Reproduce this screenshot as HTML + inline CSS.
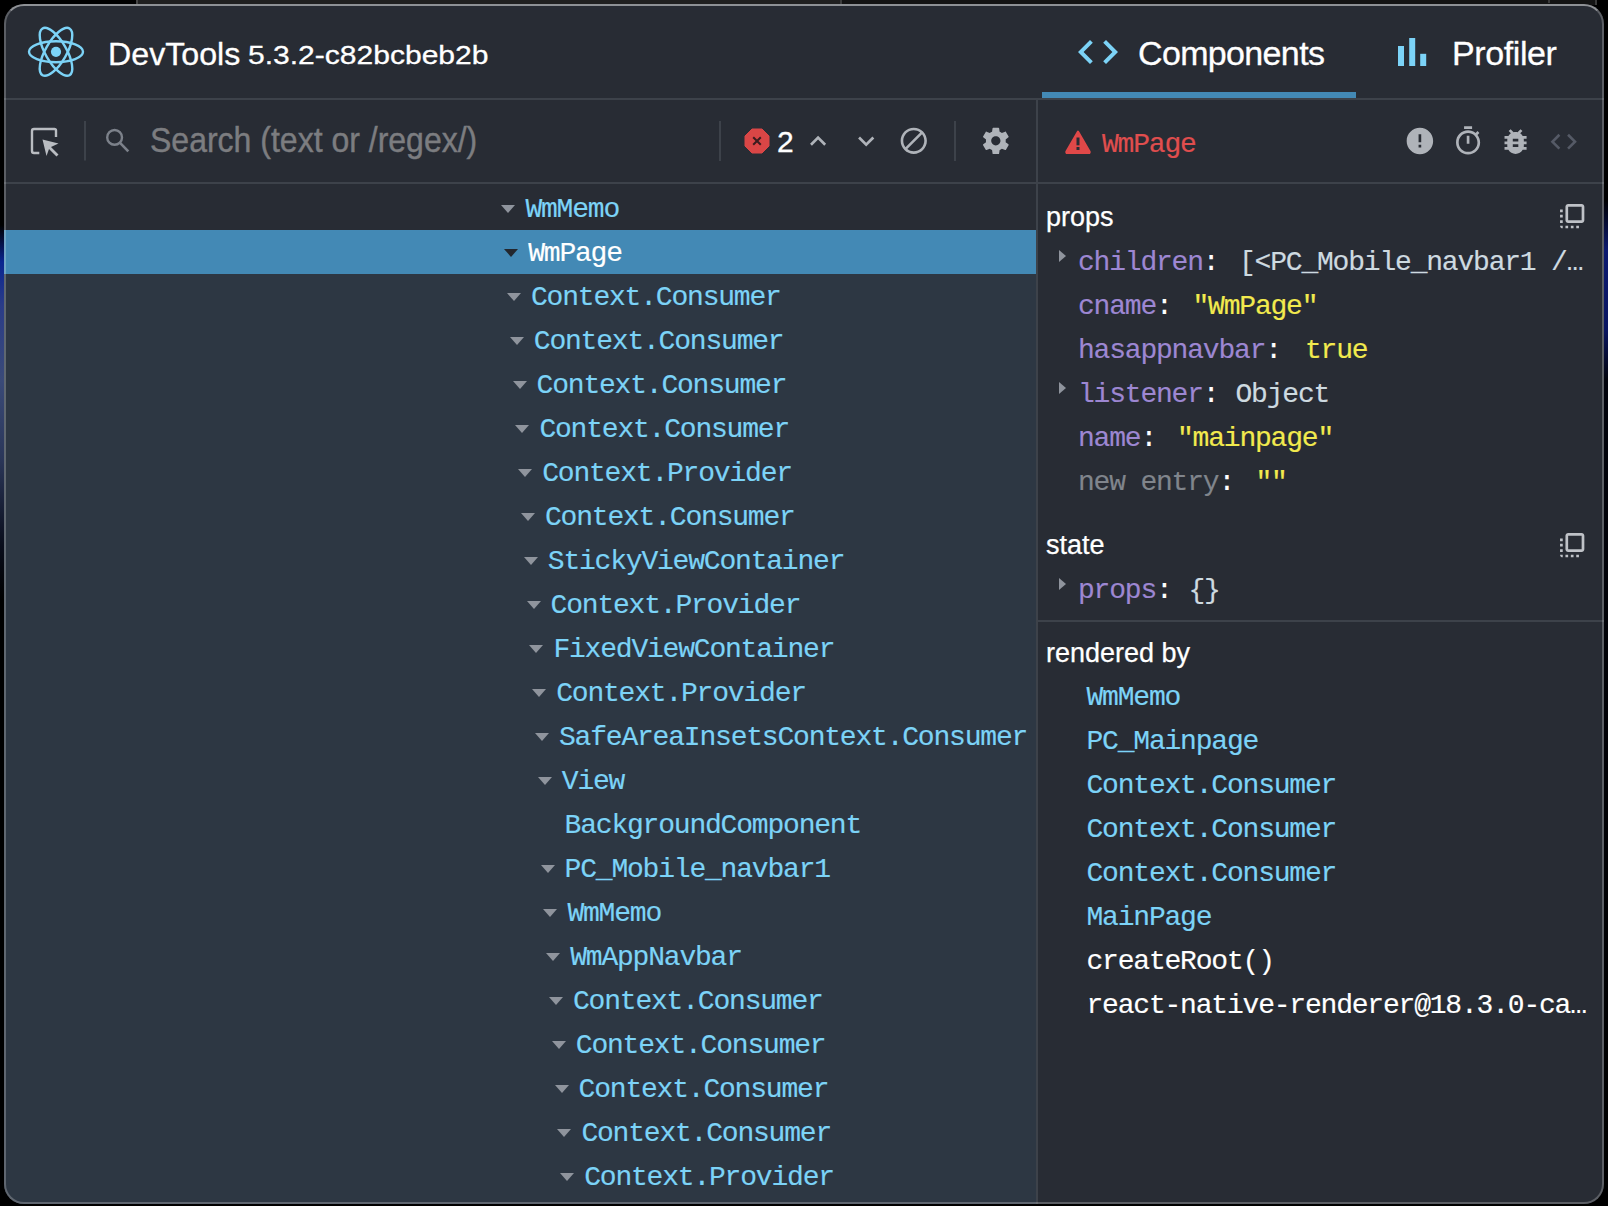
<!DOCTYPE html>
<html><head><meta charset="utf-8">
<style>
*{margin:0;padding:0;box-sizing:border-box}
html,body{width:1608px;height:1206px;overflow:hidden;background:#000}
body{position:relative;font-family:"Liberation Sans",sans-serif}
.abs{position:absolute}
svg{position:absolute;overflow:visible}
#desk{left:0;top:0;width:4px;height:1206px;background:linear-gradient(#000 0,#000 225px,#0a2590 262px,#2a3c88 305px,#3a4a78 380px,#2a3658 460px,#0a0e1c 545px,#000 600px,#000 1206px)}
#topstrip{left:136px;top:0;width:706px;height:4px;background:#1e1f21;border-left:2px solid #444}
#clip{left:4px;top:4px;width:1600px;height:1200px;border-radius:20px;background:#282c34;overflow:hidden}
#pg{left:-4px;top:-4px;width:1608px;height:1206px}
#win{left:4px;top:4px;width:1600px;height:1200px;border:2px solid rgba(255,255,255,0.24);border-top-color:rgba(255,255,255,0.48);border-radius:20px;pointer-events:none}
.line{position:absolute;background:#3d424a}
.tn{position:absolute;font-family:"Liberation Mono",monospace;font-size:28px;letter-spacing:-1.2px;-webkit-text-stroke-width:0.15px;line-height:44px;height:44px;color:#7cd3f7;white-space:pre}
.tsel{color:#fff}
.tri{position:absolute;width:0;height:0;border-left:7px solid transparent;border-right:7px solid transparent;border-top:8px solid #8f949d}
.trisel{border-top-color:#23272e}
.mono{font-family:"Liberation Mono",monospace;font-size:28px;letter-spacing:-1.2px;-webkit-text-stroke-width:0.15px;line-height:44px;height:44px;white-space:pre;position:absolute}
.k{color:#9d87d2}
.v{color:#cedae0}
.s{color:#f2ea4e}
.c{color:#fff}
.dim{color:#80858c}
.cn{color:#7cd3f7}
.lbl{position:absolute;font-size:27px;color:#fff;line-height:44px;white-space:pre;-webkit-text-stroke-width:0.25px}
.rtri{position:absolute;width:0;height:0;border-top:6.5px solid transparent;border-bottom:6.5px solid transparent;border-left:7px solid #8f949d}

</style></head><body>
<div class="abs" id="desk"></div>
<div class="abs" style="left:1604px;top:0;width:4px;height:1206px;background:linear-gradient(#000 0,#000 200px,#0c1a70 250px,#0a1660 330px,#02040c 380px,#000 1206px)"></div>
<div class="abs" style="left:136px;top:0;width:706px;height:4px;background:#202020;border-left:2px solid #454545;border-right:2px solid #3c3c3c"></div>
<div class="abs" style="left:842px;top:0;width:755px;height:5px;background:#141414;border-right:2px solid #3a3a3a"></div>
<div class="abs" style="left:1548px;top:0;width:2px;height:3px;background:#3a3a3a"></div>
<div class="abs" id="clip"><div class="abs" id="pg">
<!-- tree bg -->
<div class="abs" style="left:0;top:274px;width:1036px;height:940px;background:#2d3743"></div>
<div class="abs" style="left:0;top:230px;width:1036px;height:44px;background:#4389b5"></div>
<!-- lines -->
<div class="line" style="left:0;top:98px;width:1608px;height:2px"></div>
<div class="line" style="left:0;top:182px;width:1608px;height:2px"></div>
<div class="line" style="left:1036px;top:100px;width:2px;height:1106px"></div>
<div class="line" style="left:1038px;top:620px;width:570px;height:2px"></div>

<!-- header -->
<svg style="left:0;top:0" width="120" height="98" viewBox="0 0 120 98">
 <g fill="none" stroke="#7cd3f7" stroke-width="2.4" transform="translate(56,51.8)">
  <ellipse rx="27" ry="10.5"/>
  <ellipse rx="27" ry="10.5" transform="rotate(60)"/>
  <ellipse rx="27" ry="10.5" transform="rotate(120)"/>
 </g>
 <circle cx="56" cy="51.8" r="5.1" fill="#7cd3f7"/>
</svg>
<div class="abs" style="left:108px;top:33.5px;font-size:30.5px;line-height:40px;color:#fff;-webkit-text-stroke-width:0.3px;white-space:pre;transform:scaleX(1.055);transform-origin:0 0">DevTools</div>
<div class="abs" style="left:247.5px;top:35.2px;font-size:26px;line-height:40px;color:#fff;-webkit-text-stroke-width:0.3px;white-space:pre;transform:scaleX(1.155);transform-origin:0 0">5.3.2-c82bcbeb2b</div>

<!-- tabs -->
<svg style="left:1073.70px;top:28.10px" width="48.00" height="48.00" viewBox="0 0 24 24"><path fill="#7cd3f7" d="M9.4 16.6L4.8 12l4.6-4.6L8 6l-6 6 6 6 1.4-1.4zm5.2 0l4.6-4.6-4.6-4.6L16 6l6 6-6 6-1.4-1.4z"/></svg>
<div class="abs" style="left:1138px;top:32.5px;font-size:34px;letter-spacing:-0.65px;line-height:40px;color:#fff;-webkit-text-stroke-width:0.3px;white-space:pre">Components</div>
<div class="abs" style="left:1042px;top:92px;width:314px;height:6px;background:#4389b5"></div>
<svg style="left:1390px;top:30.2px" width="44" height="40" viewBox="0 0 44 40">
 <rect x="8" y="16" width="6" height="20" fill="#7cd3f7"/>
 <rect x="19.2" y="8" width="6" height="28" fill="#7cd3f7"/>
 <rect x="30.2" y="23.8" width="6" height="12.2" fill="#7cd3f7"/>
</svg>
<div class="abs" style="left:1452px;top:32.5px;font-size:34px;letter-spacing:-0.4px;line-height:40px;color:#fff;-webkit-text-stroke-width:0.3px;white-space:pre">Profiler</div>

<!-- toolbar left -->
<svg style="left:0;top:100px" width="140" height="82" viewBox="0 0 140 82">
 <path d="M39.3 53 H34 a2 2 0 0 1 -2 -2 V31 a2 2 0 0 1 2 -2 H54.5 a1.5 1.5 0 0 1 1.5 1.5 V37" fill="none" stroke="#b9bcc1" stroke-width="2.4"/>
 <path d="M42.5 39.5 L58.5 43.5 L51 47 L58.5 54.5 L56.5 56.5 L49 49 L46.5 56 Z" fill="#b9bcc1"/>
 <rect x="84" y="21" width="2" height="39.5" fill="#3d424a"/>
 <circle cx="114.6" cy="37.4" r="7.4" fill="none" stroke="#7c818a" stroke-width="2.4"/>
 <line x1="119.8" y1="42.6" x2="128.3" y2="51.3" stroke="#7c818a" stroke-width="2.6"/>
</svg>
<div class="line" style="left:719px;top:121px;width:2px;height:39.5px"></div>
<div class="line" style="left:954px;top:121px;width:2px;height:39.5px"></div>
<svg style="left:740px;top:124px" width="34" height="34" viewBox="0 0 34 34">
 <polygon points="12,5 22,5 29,12 29,22 22,29 12,29 5,22 5,12" fill="#d94646" stroke="#d94646" stroke-width="1" stroke-linejoin="round"/>
 <path d="M13.2 13.2 L20.8 20.8 M20.8 13.2 L13.2 20.8" stroke="#3a1c1f" stroke-width="2"/>
</svg>
<svg style="left:801.90px;top:125.20px" width="32.16" height="32.16" viewBox="0 0 24 24"><path fill="#afb3b9" d="M12 8l-6 6 1.41 1.41L12 10.83l4.59 4.58L18 14z"/></svg>
<svg style="left:849.70px;top:125.40px" width="32.40" height="32.40" viewBox="0 0 24 24"><path fill="#afb3b9" d="M16.59 8.59L12 13.17 7.41 8.59 6 10l6 6 6-6z"/></svg>
<svg style="left:898.00px;top:125.20px" width="31.56" height="31.56" viewBox="0 0 24 24"><path fill="#afb3b9" d="M12 2C6.48 2 2 6.48 2 12s4.48 10 10 10 10-4.48 10-10S17.52 2 12 2zM4 12c0-4.42 3.58-8 8-8 1.85 0 3.55.63 4.9 1.69L5.690 16.9C4.63 15.55 4 13.85 4 12zm8 8c-1.85 0-3.550-.63-4.9-1.69L18.31 7.1C19.37 8.45 20 10.15 20 12c0 4.42-3.58 8-8 8z"/></svg>
<svg style="left:980.16px;top:125.36px" width="31.68" height="31.68" viewBox="0 0 24 24"><path fill="#afb3b9" d="M19.43 12.98c.04-.32.07-.64.07-.98s-.03-.66-.07-.98l2.11-1.65c.19-.15.24-.42.12-.64l-2-3.46c-.12-.22-.39-.3-.61-.22l-2.49 1c-.52-.4-1.08-.73-1.69-.98l-.38-2.650C14.46 2.18 14.25 2 14 2h-4c-.25 0-.46.18-.49.42l-.38 2.65c-.61.25-1.17.59-1.69.98l-2.49-1c-.23-.09-.49 0-.61.22l-2 3.46c-.13.22-.07.49.12.64l2.11 1.65c-.04.32-.07.65-.07.98s.03.66.07.98l-2.11 1.65c-.19.15-.24.42-.12.64l2 3.46c.12.22.39.3.61.22l2.49-1c.52.4 1.08.73 1.69.98l.38 2.65c.03.24.24.42.49.42h4c.25 0 .46-.18.49-.42l.38-2.65c.61-.25 1.17-.59 1.69-.98l2.49 1c.23.09.49 0 .61-.22l2-3.46c.12-.22.07-.49-.12-.64l-2.11-1.65zM12 15.5c-1.93 0-3.5-1.57-3.5-3.5s1.57-3.5 3.5-3.5 3.5 1.57 3.5 3.5-1.57 3.5-3.5 3.5z"/></svg>
<div class="abs" style="left:150px;top:121.3px;font-size:32px;line-height:40px;color:#7c7d80;white-space:pre;-webkit-text-stroke-width:0.4px;transform:scaleY(1.11);transform-origin:0 31px">Search (text or /regex/)</div>
<div class="abs" style="left:777px;top:122px;font-size:30px;line-height:40px;color:#fff;-webkit-text-stroke-width:0.3px;white-space:pre">2</div>
<!-- right header -->
<svg style="left:1060px;top:124px" width="36" height="34" viewBox="0 0 36 34">
 <path d="M18 7.5 L29.6 27.6 a1 1 0 0 1 -0.9 1.5 H7.3 a1 1 0 0 1 -0.9 -1.5 Z" fill="#e04848" stroke="#e04848" stroke-width="2" stroke-linejoin="round"/>
 <rect x="16.5" y="13.5" width="3" height="7.8" fill="#282c34"/>
 <rect x="16.5" y="23" width="3" height="3" fill="#282c34"/>
</svg>
<svg style="left:1404.10px;top:124.90px" width="31.80" height="31.80" viewBox="0 0 24 24"><path fill="#afb3b9" d="M12 2C6.48 2 2 6.48 2 12s4.48 10 10 10 10-4.48 10-10S17.52 2 12 2zm1 15h-2v-2h2v2zm0-4h-2V7h2v6z"/></svg>
<svg style="left:1451.80px;top:124.60px" width="32.16" height="32.16" viewBox="0 0 24 24"><path fill="#afb3b9" d="M15 1H9v2h6V1zm-4 13h2V8h-2v6zm8.03-6.61l1.42-1.42c-.43-.51-.9-.99-1.410-1.41l-1.42 1.42C16.07 4.74 14.12 4 12 4c-4.97 0-9 4.03-9 9s4.02 9 9 9 9-4.03 9-9c0-2.12-.74-4.07-1.97-5.61zM12 20c-3.87 0-7-3.13-7-7s3.13-7 7-7 7 3.13 7 7-3.13 7-7 7z"/></svg>
<svg style="left:1499.30px;top:124.90px" width="33.12" height="33.12" viewBox="0 0 24 24"><path fill="#afb3b9" d="M20 8h-2.81c-.45-.78-1.07-1.45-1.82-1.96L17 4.41 15.59 3l-2.17 2.17C12.96 5.06 12.49 5 12 5c-.49 0-.96.06-1.41.17L8.41 3 7 4.41l1.62 1.63C7.88 6.55 7.26 7.22 6.81 8H4v2h2.09c-.05.33-.09.66-.09 1v1H4v2h2v1c0 .34.04.67.09 1H4v2h2.81c1.04 1.79 2.97 3 5.19 3s4.15-1.21 5.190-3H20v-2h-2.09c.05-.33.09-.66.09-1v-1h2v-2h-2v-1c0-.34-.04-.67-.09-1H20V8zm-6 8h-4v-2h4v2zm0-4h-4v-2h4v2z"/></svg>
<svg style="left:1548.40px;top:125.60px" width="31.44" height="31.44" viewBox="0 0 24 24"><path fill="#555a66" d="M9.4 16.6L4.8 12l4.6-4.6L8 6l-6 6 6 6 1.4-1.4zm5.2 0l4.6-4.6-4.6-4.6L16 6l6 6-6 6-1.4-1.4z"/></svg>
<div class="mono" style="left:1102px;top:122.5px;color:#e04e4e">WmPage</div>

<div class="tri" style="left:501.40px;top:204.50px"></div>
<div class="tn" style="left:525.40px;top:187.50px">WmMemo</div>
<div class="tri trisel" style="left:504.20px;top:248.50px"></div>
<div class="tn tsel" style="left:528.20px;top:231.50px">WmPage</div>
<div class="tri" style="left:507.00px;top:292.50px"></div>
<div class="tn" style="left:531.00px;top:275.50px">Context.Consumer</div>
<div class="tri" style="left:509.80px;top:336.50px"></div>
<div class="tn" style="left:533.80px;top:319.50px">Context.Consumer</div>
<div class="tri" style="left:512.60px;top:380.50px"></div>
<div class="tn" style="left:536.60px;top:363.50px">Context.Consumer</div>
<div class="tri" style="left:515.40px;top:424.50px"></div>
<div class="tn" style="left:539.40px;top:407.50px">Context.Consumer</div>
<div class="tri" style="left:518.20px;top:468.50px"></div>
<div class="tn" style="left:542.20px;top:451.50px">Context.Provider</div>
<div class="tri" style="left:521.00px;top:512.50px"></div>
<div class="tn" style="left:545.00px;top:495.50px">Context.Consumer</div>
<div class="tri" style="left:523.80px;top:556.50px"></div>
<div class="tn" style="left:547.80px;top:539.50px">StickyViewContainer</div>
<div class="tri" style="left:526.60px;top:600.50px"></div>
<div class="tn" style="left:550.60px;top:583.50px">Context.Provider</div>
<div class="tri" style="left:529.40px;top:644.50px"></div>
<div class="tn" style="left:553.40px;top:627.50px">FixedViewContainer</div>
<div class="tri" style="left:532.20px;top:688.50px"></div>
<div class="tn" style="left:556.20px;top:671.50px">Context.Provider</div>
<div class="tri" style="left:535.00px;top:732.50px"></div>
<div class="tn" style="left:559.00px;top:715.50px">SafeAreaInsetsContext.Consumer</div>
<div class="tri" style="left:537.80px;top:776.50px"></div>
<div class="tn" style="left:561.80px;top:759.50px">View</div>
<div class="tn" style="left:564.60px;top:803.50px">BackgroundComponent</div>
<div class="tri" style="left:540.60px;top:864.50px"></div>
<div class="tn" style="left:564.60px;top:847.50px">PC_Mobile_navbar1</div>
<div class="tri" style="left:543.40px;top:908.50px"></div>
<div class="tn" style="left:567.40px;top:891.50px">WmMemo</div>
<div class="tri" style="left:546.20px;top:952.50px"></div>
<div class="tn" style="left:570.20px;top:935.50px">WmAppNavbar</div>
<div class="tri" style="left:549.00px;top:996.50px"></div>
<div class="tn" style="left:573.00px;top:979.50px">Context.Consumer</div>
<div class="tri" style="left:551.80px;top:1040.50px"></div>
<div class="tn" style="left:575.80px;top:1023.50px">Context.Consumer</div>
<div class="tri" style="left:554.60px;top:1084.50px"></div>
<div class="tn" style="left:578.60px;top:1067.50px">Context.Consumer</div>
<div class="tri" style="left:557.40px;top:1128.50px"></div>
<div class="tn" style="left:581.40px;top:1111.50px">Context.Consumer</div>
<div class="tri" style="left:560.20px;top:1172.50px"></div>
<div class="tn" style="left:584.20px;top:1155.50px">Context.Provider</div>

<!-- right panel content -->
<div class="lbl" style="left:1046px;top:195px">props</div>
<div class="mono" style="left:1078px;top:241px"><span class="k">children</span><span class="c">:</span></div>
<div class="mono v" style="left:1239px;top:241px">[&lt;PC_Mobile_navbar1 /…</div>
<div class="mono" style="left:1078px;top:285px"><span class="k">cname</span><span class="c">:</span></div>
<div class="mono s" style="left:1192.5px;top:285px">"WmPage"</div>
<div class="mono" style="left:1078px;top:329px"><span class="k">hasappnavbar</span><span class="c">:</span></div>
<div class="mono s" style="left:1305px;top:329px">true</div>
<div class="mono" style="left:1078px;top:373px"><span class="k">listener</span><span class="c">:</span></div>
<div class="mono v" style="left:1235.5px;top:373px">Object</div>
<div class="mono" style="left:1078px;top:417px"><span class="k">name</span><span class="c">:</span></div>
<div class="mono s" style="left:1177px;top:417px">"mainpage"</div>
<div class="mono" style="left:1078px;top:461px"><span class="dim">new entry</span><span class="c">:</span></div>
<div class="mono s" style="left:1255.5px;top:461px">""</div>
<div class="rtri" style="left:1059px;top:250px"></div>
<div class="rtri" style="left:1059px;top:382px"></div>

<div class="lbl" style="left:1046px;top:523px">state</div>
<div class="mono" style="left:1078px;top:569px"><span class="k">props</span><span class="c">:</span></div>
<div class="mono v" style="left:1188.5px;top:569px">{}</div>
<div class="rtri" style="left:1059px;top:578px"></div>

<svg style="left:1555.65px;top:199.90px" width="32.40" height="32.40" viewBox="0 0 24 24"><path fill="#bfc2c7" d="M3 13h2v-2H3v2zm0 4h2v-2H3v2zm2 4v-2H3c0 1.1.89 2 2 2zM3 9h2V7H3v2zm12 12h2v-2h-2v2zm4-18H9c-1.11 0-2 .9-2 2v10c0 1.1.89 2 2 2h10c1.1 0 2-.9 2-2V5c0-1.1-.9-2-2-2zm0 12H9V5h10v10zm-8 6h2v-2h-2v2zm-4 0h2v-2H7v2z"/></svg>
<svg style="left:1555.65px;top:528.50px" width="32.40" height="32.40" viewBox="0 0 24 24"><path fill="#bfc2c7" d="M3 13h2v-2H3v2zm0 4h2v-2H3v2zm2 4v-2H3c0 1.1.89 2 2 2zM3 9h2V7H3v2zm12 12h2v-2h-2v2zm4-18H9c-1.11 0-2 .9-2 2v10c0 1.1.89 2 2 2h10c1.1 0 2-.9 2-2V5c0-1.1-.9-2-2-2zm0 12H9V5h10v10zm-8 6h2v-2h-2v2zm-4 0h2v-2H7v2z"/></svg>

<div class="lbl" style="left:1046px;top:631px">rendered by</div>
<div class="mono cn" style="left:1086.5px;top:676px">WmMemo</div>
<div class="mono cn" style="left:1086.5px;top:720px">PC_Mainpage</div>
<div class="mono cn" style="left:1086.5px;top:764px">Context.Consumer</div>
<div class="mono cn" style="left:1086.5px;top:808px">Context.Consumer</div>
<div class="mono cn" style="left:1086.5px;top:852px">Context.Consumer</div>
<div class="mono cn" style="left:1086.5px;top:896px">MainPage</div>
<div class="mono c" style="left:1086.5px;top:940px">createRoot()</div>
<div class="mono c" style="left:1086.5px;top:984px">react-native-renderer@18.3.0-ca…</div>

</div></div>
<div class="abs" id="win"></div>
</body></html>
